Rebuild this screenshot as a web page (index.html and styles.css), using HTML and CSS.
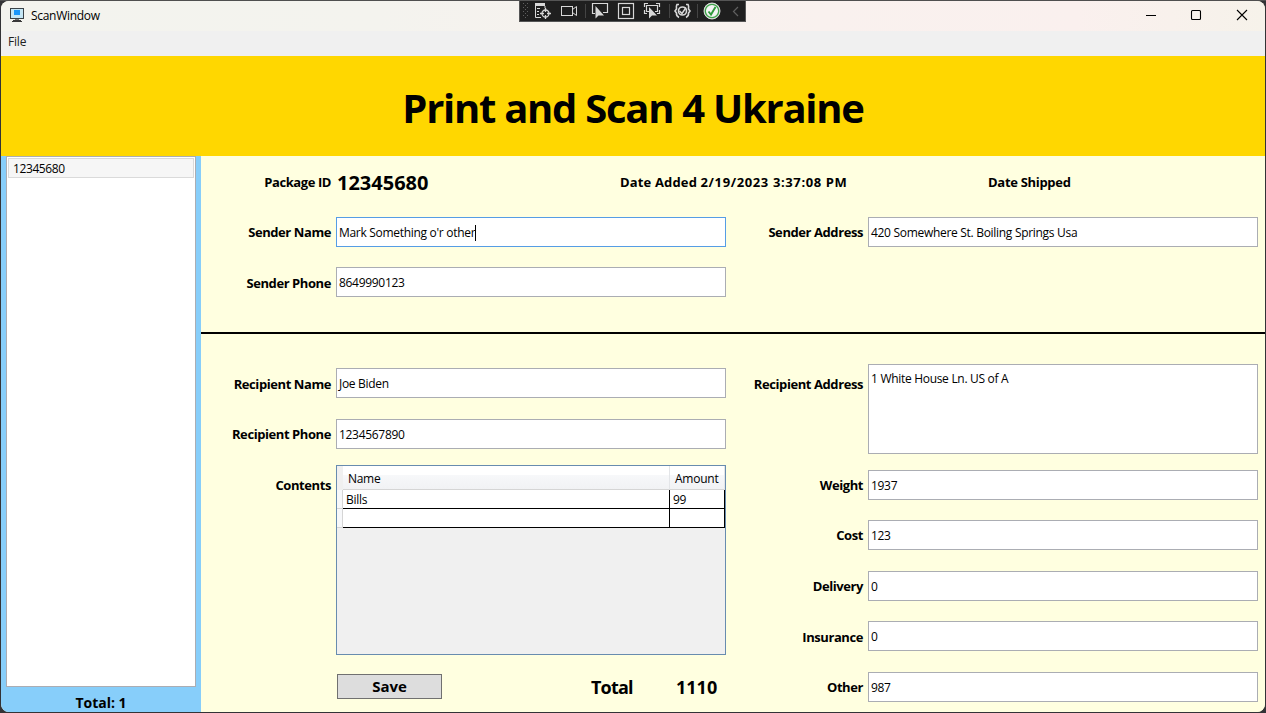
FILE: index.html
```html
<!DOCTYPE html>
<html lang="en">
<head>
<meta charset="utf-8">
<title>ScanWindow</title>
<link rel="stylesheet" href="styles.css">
</head>
<body>
<div class="window">
  <header class="titlebar">
    <svg class="app-icon" width="16" height="16" viewBox="0 0 16 16" shape-rendering="crispEdges">
      <rect x="1.5" y="0.5" width="13" height="10" fill="#c4e6f5" stroke="#3a4248"/>
      <rect x="5" y="2" width="6" height="5" fill="#1a96fa"/>
      <rect x="6" y="11" width="4" height="1" fill="#777"/>
      <rect x="4" y="12" width="8" height="1" fill="#3a3a3a"/>
      <rect x="3" y="13" width="10" height="1" fill="#3a3a3a"/>
    </svg>
    <span class="app-title">ScanWindow</span>
    <div class="caption-buttons">
      <svg width="10" height="12" viewBox="0 0 10 12"><path d="M0 6.5H10" stroke="#000"/></svg>
      <svg width="12" height="12" viewBox="0 0 12 12"><rect x="1.5" y="1.5" width="9" height="9" rx="1" fill="none" stroke="#000" stroke-width="1.1"/></svg>
      <svg width="12" height="12" viewBox="0 0 12 12"><path d="M1 1L11 11M11 1L1 11" stroke="#000" stroke-width="1.1"/></svg>
    </div>
  </header>
  <nav class="menubar"><span>File</span></nav>
  <div class="banner"><h1>Print and Scan 4 Ukraine</h1></div>
  <div class="body">
    <aside class="sidebar">
      <div class="list"><div class="list-item">12345680</div></div>
      <div class="list-total">Total: 1</div>
    </aside>
    <main class="main">
      <section class="form sender">
        <div class="label">Package ID</div>
        <div class="package-id">12345680</div>
        <div class="dates">
          <span class="added">Date Added <span class="stamp">2/19/2023 3:37:08 PM</span></span>
          <span class="shipped">Date Shipped</span>
        </div>
        <div class="label">Sender Name</div>
        <div class="field focused">Mark Something o'r other<i class="caret"></i></div>
        <div class="label">Sender Address</div>
        <div class="field">420 Somewhere St. Boiling Springs Usa</div>
        <div class="label low">Sender Phone</div>
        <div class="field">8649990123</div>
      </section>
      <section class="form recipient">
        <div class="label low">Recipient Name</div>
        <div class="field">Joe Biden</div>
        <div class="label low">Recipient Address</div>
        <div class="field area">1 White House Ln. US of A</div>
        <div class="label c1">Recipient Phone</div>
        <div class="field c2">1234567890</div>
        <div class="label c1">Contents</div>
        <div class="datagrid">
          <div class="grid-head"><span></span><span class="name">Name</span><span class="amount">Amount</span></div>
          <div class="grid-row"><span></span><span>Bills</span><span>99</span></div>
          <div class="grid-row"><span></span><span></span><span></span></div>
        </div>
        <div class="label c3">Weight</div>
        <div class="field c4">1937</div>
        <div class="label c3">Cost</div>
        <div class="field c4">123</div>
        <div class="label c3">Delivery</div>
        <div class="field c4">0</div>
        <div class="label c3 low">Insurance</div>
        <div class="field c4">0</div>
        <div class="actions">
          <button class="save">Save</button>
          <span class="sum-label">Total</span>
          <span class="sum">1110</span>
        </div>
        <div class="label c3">Other</div>
        <div class="field c4">987</div>
      </section>
    </main>
  </div>
</div>
<div class="debugbar">
  <svg width="227" height="22" viewBox="0 0 227 22" fill="none" stroke="#d8d8d8">
    <g stroke="#606060" stroke-dasharray="1 3"><path d="M4.5 3V19M8.5 3V19"/><path d="M6.5 5V19"/></g>
    <path d="M16 4.500H26" stroke-width="3"/>
    <path d="M16.500 6V17.500H22M18 8.500H21M18 11.500H20M18 14.500H20M26 6V8"/>
    <circle cx="26.500" cy="13.500" r="3.500" stroke-width="1.300"/><path d="M26.500 8V12M26.500 15V19M21 13.500H25M28 13.500H32" stroke-width="1.300"/>
    <rect x="42.500" y="6.500" width="11" height="9"/><path d="M53.500 9.500L57.500 6.500V15.500L53.500 12.500"/>
    <path d="M66.500 4V18M150.500 4V18M178.500 4V18" stroke="#444"/>
    <path d="M76 13.500H73.500V3.500H88.500V12.500H84" stroke-width="1.200"/>
    <path d="M76.500 6V18.500L79.500 15.500H85Z" fill="#d8d8d8" stroke="none"/>
    <rect x="99.500" y="3.500" width="15" height="15" stroke-width="1.200"/><rect x="103.500" y="7.500" width="7" height="7" stroke-width="1.200"/>
    <path d="M125.500 7V3.500H129M137 3.500H140.500V7M125.500 10V13.500H128M140.500 10V13.500H138M130 11.500H127.500V5.500H138.500V11.500H136" stroke-width="1.200"/>
    <path d="M130 7V18.500L133 15.500H138Z" fill="#d8d8d8" stroke="none"/>
    <g stroke-width="1.600"><path d="M160 4.500H158Q157 6 157.500 9L156 11L157.500 13Q157 16 160 17.500M167 4.500H169Q170 6 169.500 9L171 11L169.500 13Q170 16 167 17.500"/><circle cx="163.500" cy="11" r="4"/><path d="M160.500 11L163 13.500L167 7.500" stroke-width="1.500"/></g>
    <circle cx="193" cy="11" r="8" fill="#f4f4f4"/><circle cx="193" cy="11" r="6.700" stroke="#3fa34a" stroke-width="1.300"/>
    <path d="M189.500 11.500L192 14.500L196.500 7" stroke="#2f9a3c" stroke-width="1.900"/>
    <path d="M219 7L214.500 11.500L219 16" stroke="#606060" stroke-width="1.200"/>
  </svg>
</div>
</body>
</html>
```
FILE: styles.css
```css
* { box-sizing: border-box; }
body {
  margin: 0;
  width: 1266px;
  height: 713px;
  overflow: hidden;
  padding: 1px;
  background: linear-gradient(#4f4f4f 0 1px, #333336 1px);
  font: 12px/16px "Open Sans", "Noto Sans", sans-serif;
  color: #000;
}
.window {
  display: flex;
  flex-direction: column;
  width: 1264px;
  height: 711px;
  border-radius: 8px;
  overflow: hidden;
  background: #ffffe0;
}
.titlebar {
  height: 30px;
  display: flex;
  align-items: center;
  padding: 0 17px 2px 8px;
  background: linear-gradient(90deg, #f3f3ee 0%, #f4f3ee 30%, #f9f1ee 65%, #faf0ee 85%, #f6f2ea 100%);
}
.app-icon { margin-top: 1px; }
.app-title { margin: 2px 0 0 6px; letter-spacing: -0.3px; }
.caption-buttons { display: flex; gap: 34px; margin-left: auto; }
.menubar { height: 25px; padding: 3px 7px; background: #f0f0f0; color: #212121; letter-spacing: -0.2px; }
.banner {
  height: 100px;
  display: flex;
  align-items: center;
  justify-content: center;
  background: #ffd700;
  padding-top: 4px;
}
h1 { margin: 0; font-size: 40px; line-height: 54px; letter-spacing: -1.27px; white-space: nowrap; }
.body { display: flex; flex: 1; min-height: 0; }
.sidebar { width: 200px; background: #87cefa; padding: 0 5px; display: flex; flex-direction: column; }
.list { height: 531px; border: 1px solid #abadb3; background: #fff; padding: 1px; }
.list-item { height: 20px; border: 1px solid #dadada; background: #f6f6f6; padding: 2px 4px; letter-spacing: -0.4px; }
.list-total { text-align: center; font-weight: 700; font-size: 14px; line-height: 20px; padding: 6px 0 0 0; height: 25px; }
.main { width: 1064px; background: #ffffe0; }
.form { display: grid; grid-template-columns: 135px 390px 142px 390px; }
.sender { grid-template-rows: 50px 50px 50px; height: 178px; padding-top: 1px; border-bottom: 2px solid #000; }
.recipient { grid-template-rows: 51px 51px 50px 51px 50px 51px 50px; padding-top: 24px; }
.label { font-weight: 700; font-size: 13px; text-align: right; padding: 17px 5px 0 0; letter-spacing: -0.42px; white-space: nowrap; }
.label.low { padding-top: 18px; }
.package-id { font-weight: 700; font-size: 20px; line-height: 26px; padding: 13px 0 0 1px; }
.dates { grid-column: 3 / 5; display: flex; margin-left: -106px; padding-top: 17px; font-weight: 700; font-size: 13px; white-space: nowrap; letter-spacing: -0.3px; }
.added { width: 368px; letter-spacing: 0.15px; }
.stamp { letter-spacing: 0.62px; }
.field { height: 30px; margin-top: 10px; border: 1px solid #abadb3; background: #fff; padding: 7px 2px 0; white-space: nowrap; letter-spacing: -0.3px; }
.focused { border-color: #569de5; }
.caret { display: inline-block; width: 1px; height: 16px; background: #000; vertical-align: top; }
.area { grid-row: 1 / 3; grid-column: 4; height: 90px; margin-top: 6px; padding-top: 6px; }
.c1 { grid-column: 1; }
.c2 { grid-column: 2; }
.c3 { grid-column: 3; }
.c4 { grid-column: 4; }
.datagrid { grid-column: 2; grid-row: 3 / 7; height: 190px; margin-top: 5px; border: 1px solid #688caf; background: #f0f0f0; }
.grid-head, .grid-row { display: grid; grid-template-columns: 6px 327px 55px; }
.grid-head { height: 24px; }
.grid-head span { padding: 5px 5px 0; border-bottom: 1px solid #d5d5d5; border-right: 1px solid #e3e5e8; background: linear-gradient(#fff 0 40%, #f7f8fa 40%, #f1f2f4); letter-spacing: -0.25px; }
.grid-head .name { letter-spacing: -0.3px; }
.grid-head span:first-child { border-color: #f0f0f0; background: #f0f0f0; padding: 0; }
.grid-row { height: 19px; grid-template-rows: 19px; }
.grid-row span { border-right: 1px solid #000; border-bottom: 1px solid #000; background: #fff; padding: 1px 3px 0; line-height: 17px; letter-spacing: -0.3px; }
.grid-row span:first-child { border-color: #d5d5d5; background: #f7f8fa; padding: 0; }
.actions { grid-column: 2; grid-row: 7; display: flex; align-items: flex-start; padding: 12px 0 0 1px; font-weight: 700; }
.save { width: 105px; height: 25px; padding: 0 0 1px; border: 1px solid #707070; background: #ddd; font: 700 15px/22px "Open Sans", "Noto Sans", sans-serif; color: #000; }
.sum-label { margin-left: 149px; width: 85px; font-size: 18px; line-height: 26px; letter-spacing: -0.8px; }
.sum { font-size: 18px; line-height: 26px; }
.debugbar { position: absolute; left: 519px; top: 0; width: 227px; height: 22px; background: #1f1f1f; border: 1px solid #555; overflow: hidden; }
.debugbar svg { display: block; margin: -1px; }
```
